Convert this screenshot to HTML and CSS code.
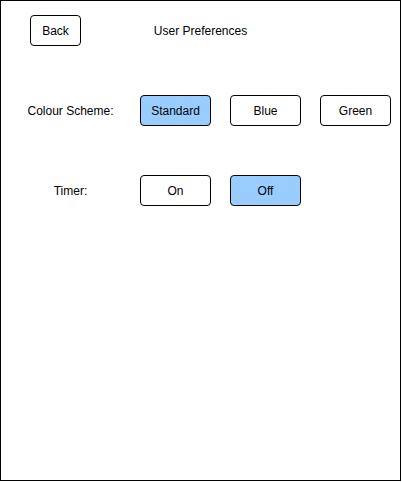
FILE: index.html
```html
<!DOCTYPE html>
<html lang="en">
<head>
    <meta charset="UTF-8">
    <meta name="viewport" content="width=device-width, initial-scale=1.0">
    <title>User Preferences</title>
    <link rel="stylesheet" href="styles.css">
</head>
<body>
    <div class="frame">
        <div class="header">
            <button class="btn btn-back">Back</button>
            <div class="title">User Preferences</div>
            <div></div>
        </div>

        <div class="pref-row">
            <div class="pref-label">Colour Scheme:</div>
            <button class="btn option selected">Standard</button>
            <button class="btn option">Blue</button>
            <button class="btn option">Green</button>
        </div>

        <div class="pref-row">
            <div class="pref-label">Timer:</div>
            <button class="btn option">On</button>
            <button class="btn option selected">Off</button>
        </div>
    </div>
</body>
</html>
```

FILE: styles.css
```css
* {
    box-sizing: border-box;
    margin: 0;
    padding: 0;
}

body {
    font-family: "Liberation Sans", Arial, sans-serif;
    font-size: 12px;
    color: #000;
    background: #fff;
}

.frame {
    width: 401px;
    height: 481px;
    border: 1px solid #000;
    padding-top: 14px;
}

.header {
    display: grid;
    grid-template-columns: 1fr auto 1fr;
    align-items: center;
    height: 31px;
}

.title {
    text-align: center;
}

.btn {
    font-family: inherit;
    font-size: 12px;
    color: #000;
    background: #fff;
    border: 1px solid #000;
    border-radius: 4px;
    height: 31px;
    cursor: pointer;
}

.btn-back {
    width: 51px;
    margin-left: 29px;
}

.pref-row {
    display: flex;
    align-items: center;
    margin-top: 49px;
}

.pref-label {
    width: 139px;
    text-align: center;
}

.option {
    width: 71px;
}

.option + .option {
    margin-left: 19px;
}

.option.selected {
    background: #99ccff;
}
```
